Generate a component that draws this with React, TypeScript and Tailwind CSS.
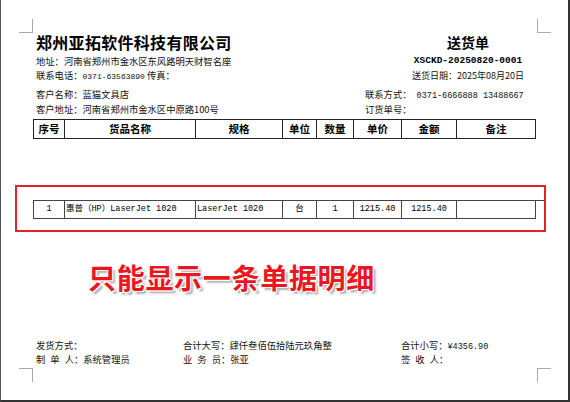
import React from "react";

const mono = "font-['Liberation_Mono','Noto_Sans_CJK_SC',monospace]";
const cols = "grid grid-cols-[31px_131px_87px_34px_37px_48px_55px_79px]";

const headers = ["序号", "货品名称", "规格", "单位", "数量", "单价", "金额", "备注"];

const rows = [
  { no: "1", name: "惠普（HP）LaserJet 1020", spec: "LaserJet 1020", unit: "台", qty: "1", price: "1215.40", amount: "1215.40", note: "" },
];

function Spaced({ chars }: { chars: string[] }) {
  return (
    <>
      {chars.map((c, i) => (
        <span key={i} className={i < chars.length - 1 ? "mr-[5px]" : ""}>
          {c}
        </span>
      ))}
    </>
  );
}

export default function App() {
  return (
    <div className="relative w-[570px] h-[402px] overflow-hidden bg-white border-l border-l-[#555] border-r-2 border-b-2 border-r-[#333] border-b-[#333] text-[#111] whitespace-nowrap font-['Noto_Sans_CJK_SC',sans-serif]">
      {/* crop marks */}
      <div className="absolute left-[18px] top-[19px] w-[14px] h-[14px] border-r border-b border-[#aaa]" />
      <div className="absolute left-[536px] top-[19px] w-[14px] h-[14px] border-l border-b border-[#aaa]" />
      <div className="absolute left-[18px] top-[368px] w-[14px] h-[14px] border-r border-t border-[#aaa]" />
      <div className="absolute left-[536px] top-[368px] w-[14px] h-[14px] border-l border-t border-[#aaa]" />

      <div className="pt-[32px] pl-[32px] w-[535px]">
        {/* company + doc title */}
        <div className="flex">
          <div className="flex-1 pl-[3px] text-[9.3px]">
            <div className="h-[20px] leading-[20px] text-[16px] font-bold tracking-[0.3px] text-black">郑州亚拓软件科技有限公司</div>
            <div className="mt-[2px] h-[14px] leading-[14px]">地址：河南省郑州市金水区东风路明天财智名座</div>
            <div className="h-[14px] leading-[14px]">
              联系电话：<span className={`${mono} text-[8px]`}>0371-63563890</span> 传真：
            </div>
          </div>
          <div className="w-[120px] mr-[8px] flex flex-col items-center">
            <div className="h-[20px] leading-[20px] text-[14px] font-bold text-black">送货单</div>
            <div className={`mt-[2px] h-[14px] leading-[14px] text-[9.5px] font-bold text-black ${mono}`}>XSCKD-20250820-0001</div>
            <div className="mt-[1px] h-[14px] leading-[14px] text-[9px]">送货日期：2025年08月20日</div>
          </div>
        </div>

        {/* customer */}
        <div className="mt-[4px] flex text-[9.3px]">
          <div className="w-[332px] pl-[3px]">
            <div className="h-[15px] leading-[15px]">客户名称：蓝猫文具店</div>
            <div className="h-[14px] leading-[14px]">客户地址：河南省郑州市金水区中原路100号</div>
          </div>
          <div className="flex-1">
            <div className="h-[15px] leading-[15px]">
              联系方式：<span className={`${mono} text-[8.5px]`}> 0371-6666888 13488667</span>
            </div>
            <div className="h-[14px] leading-[14px]">订货单号：</div>
          </div>
        </div>

        {/* table header */}
        <div className={`mt-[3px] ${cols} border-t border-l border-[#222]`}>
          {headers.map((h) => (
            <div key={h} className="h-[19px] border-r border-b border-[#222] flex items-center justify-center text-[10.5px] font-bold text-black">
              {h}
            </div>
          ))}
        </div>

        {/* highlighted detail row */}
        <div className="mt-[46px] -ml-[18px] w-[531px] h-[47px] border-2 border-[#e5202a] pt-[13px] pl-[16px]">
          {rows.map((r) => (
            <div key={r.no} className={`${cols} border-t border-l border-[#444] text-[8.5px] ${mono} text-black`}>
              <div className="h-[18px] border-r border-b border-[#444] flex items-center justify-center">{r.no}</div>
              <div className="h-[18px] border-r border-b border-[#444] flex items-center pl-[1px]">{r.name}</div>
              <div className="h-[18px] border-r border-b border-[#444] flex items-center pl-[1px]">{r.spec}</div>
              <div className="h-[18px] border-r border-b border-[#444] flex items-center justify-center">{r.unit}</div>
              <div className="h-[18px] border-r border-b border-[#444] flex items-center justify-center">{r.qty}</div>
              <div className="h-[18px] border-r border-b border-[#444] flex items-center justify-center">{r.price}</div>
              <div className="h-[18px] border-r border-b border-[#444] flex items-center justify-center">{r.amount}</div>
              <div className="h-[18px] border-r border-b border-[#444]">{r.note}</div>
            </div>
          ))}
        </div>

        {/* annotation */}
        <div className="mt-[27px] pl-[55px] h-[36px] leading-[36px] text-[28px] font-bold tracking-[0.7px] text-[#ea1620] [text-shadow:1px_1px_0_#fff,-1px_-1px_0_#fff,1px_-1px_0_#fff,-1px_1px_0_#fff,3px_3px_2px_rgba(0,0,0,0.3)]">
          只能显示一条单据明细
        </div>

        {/* footer */}
        <div className="mt-[43px] pl-[3px] flex text-[9.3px]">
          <div className="w-[147px]">
            <div className="h-[14px] leading-[14px]">发货方式：</div>
            <div className="h-[14px] leading-[14px]">
              <Spaced chars={["制", "单", "人"]} />：系统管理员
            </div>
          </div>
          <div className="w-[218px]">
            <div className="h-[14px] leading-[14px]">合计大写：肆仟叁佰伍拾陆元玖角整</div>
            <div className="h-[14px] leading-[14px]">
              <Spaced chars={["业", "务", "员"]} />：张亚
            </div>
          </div>
          <div className="flex-1">
            <div className="h-[14px] leading-[14px]">
              合计小写：<span className={`${mono} text-[8.5px]`}>¥4356.90</span>
            </div>
            <div className="h-[14px] leading-[14px]">
              <Spaced chars={["签", "收", "人"]} />：
            </div>
          </div>
        </div>
      </div>
    </div>
  );
}
